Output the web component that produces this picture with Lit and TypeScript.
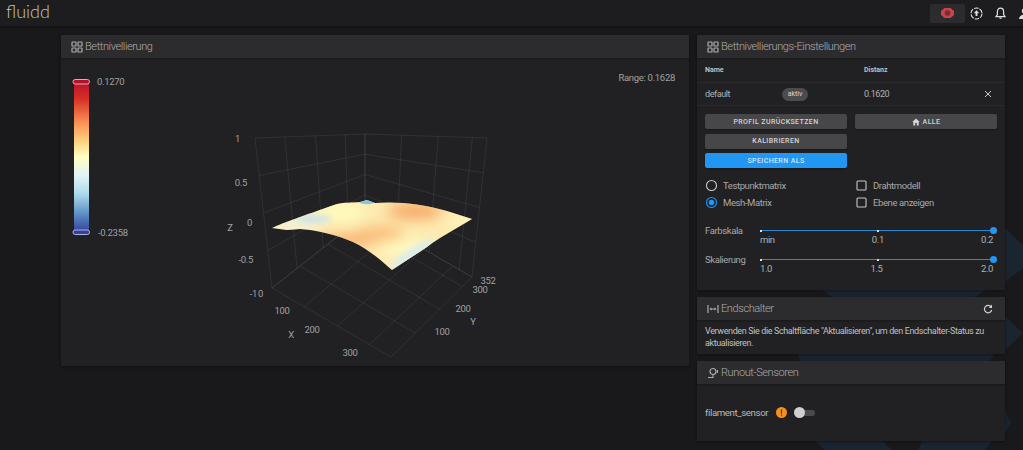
import { LitElement, css, html, svg } from "lit";
import { customElement } from "lit/decorators.js";

type Pt = [number, number];

// chart corners, page coordinates
const LEFT_WALL: Pt[] = [[255, 138], [365, 134], [365, 215], [272, 288]];
const RIGHT_WALL: Pt[] = [[365, 134], [487, 138], [472, 277], [365, 215]];
const FLOOR: Pt[] = [[272, 288], [365, 215], [472, 277], [391, 357]];

const lerp = (a: Pt, b: Pt, t: number): Pt => [a[0] + (b[0] - a[0]) * t, a[1] + (b[1] - a[1]) * t];

function quadLines(q: Pt[], uStops: number[], vStops: number[]) {
  const lines: [Pt, Pt][] = [];
  for (const u of uStops) lines.push([lerp(q[0], q[1], u), lerp(q[3], q[2], u)]);
  for (const v of vStops) lines.push([lerp(q[0], q[3], v), lerp(q[1], q[2], v)]);
  return lines;
}

const GRID_ICON = svg`<svg class="icon" viewBox="0 0 12 12"><g fill="none" stroke="currentColor" stroke-width="1.2"><rect x="1" y="1" width="4" height="4" rx=".6"/><rect x="7" y="1" width="4" height="4" rx=".6"/><rect x="1" y="7" width="4" height="4" rx=".6"/><rect x="7" y="7" width="4" height="4" rx=".6"/></g></svg>`;

@customElement("mesh-chart")
export class MeshChart extends LitElement {
  static override styles = css`
    :host {
      display: block;
      height: 308px;
    }
    svg {
      display: block;
      width: 628px;
      height: 308px;
    }
    text {
      font-family: Roboto, sans-serif;
      font-size: 9.5px;
      letter-spacing: -0.3px;
      fill: #a0a0a2;
    }
  `;

  private grid() {
    const zs = [0, 0.25, 0.5, 0.75, 1];
    const lines = [
      ...quadLines(LEFT_WALL, [0, 0.27, 0.55, 0.82, 1], zs),
      ...quadLines(RIGHT_WALL, [0, 0.3, 0.6, 0.88, 1], zs),
      ...quadLines(FLOOR, [0, 0.3, 0.6, 0.88, 1], [0, 0.27, 0.55, 0.82, 1]),
    ];
    return lines.map(
      ([a, b]) => svg`<line x1=${a[0]} y1=${a[1]} x2=${b[0]} y2=${b[1]} stroke="#fff" stroke-opacity=".07" stroke-width="1"/>`
    );
  }

  override render() {
    const surface =
      "M272 228 C285 222 300 217 337 204 C345 202 352 203 360 202 L367 200 L375 203 C395 201 425 204 447 211 L472 219 L450 232 C440 238 432 243 427 247 L392 270 C385 264 370 250 353 242 C335 234 315 230 300 229 L287 230 Z";
    return html`<svg viewBox="61 58 628 308">
      <defs>
        <linearGradient id="scale" x1="0" y1="0" x2="0" y2="1">
          <stop offset="0" stop-color="#b5102c"/>
          <stop offset=".12" stop-color="#d73027"/>
          <stop offset=".27" stop-color="#f98e52"/>
          <stop offset=".38" stop-color="#fdc777"/>
          <stop offset=".5" stop-color="#ffffbf"/>
          <stop offset=".63" stop-color="#e0f3f8"/>
          <stop offset=".75" stop-color="#abd9e9"/>
          <stop offset=".88" stop-color="#5d8fc4"/>
          <stop offset="1" stop-color="#33409a"/>
        </linearGradient>
        <clipPath id="mesh"><path d=${surface}/></clipPath>
        <filter id="soft" x="-50%" y="-50%" width="200%" height="200%"><feGaussianBlur stdDeviation="7"/></filter>
        <filter id="softer" x="-50%" y="-50%" width="200%" height="200%"><feGaussianBlur stdDeviation="3"/></filter>
      </defs>

      ${this.grid()}

      <g clip-path="url(#mesh)">
        <rect x="260" y="190" width="225" height="90" fill="#fdeab0"/>
        <g filter="url(#soft)">
          <ellipse cx="415" cy="211" rx="28" ry="8" fill="#f6a663"/>
          <ellipse cx="350" cy="240" rx="32" ry="5" fill="#f59e58"/>
          <ellipse cx="380" cy="234" rx="24" ry="8" fill="#fbbd7c"/>
          <ellipse cx="340" cy="212" rx="26" ry="8" fill="#ffffbf"/>
          <ellipse cx="405" cy="248" rx="26" ry="7" fill="#ffffc4"/>
          <ellipse cx="462" cy="222" rx="14" ry="5" fill="#fffac0"/>
          <ellipse cx="293" cy="224" rx="26" ry="5" fill="#ebf5ee"/>
        </g>
        <g filter="url(#softer)">
          <ellipse cx="314" cy="219" rx="18" ry="3.5" fill="#c5e1f0"/>
          <ellipse cx="412" cy="254" rx="26" ry="5" transform="rotate(-33 412 254)" fill="#d8edf0"/>
        </g>
        <ellipse cx="367" cy="201.5" rx="8" ry="2.8" fill="#7cc0e8" opacity=".9"/>
      </g>

      <rect x="74" y="81" width="15" height="151" fill="url(#scale)"/>
      <rect x="73" y="79.500" width="16.500" height="4.500" rx="2.200" fill="#b5102c" stroke="#e9a9b8"/>
      <rect x="73" y="230" width="16.500" height="4.500" rx="2.200" fill="#33409a" stroke="#aeb2e6"/>
      <text x="97" y="85">0.1270</text>
      <text x="98" y="236">-0.2358</text>
      <text x="675" y="81" text-anchor="end">Range: 0.1628</text>

      <text x="240" y="142" text-anchor="end">1</text>
      <text x="247" y="186" text-anchor="end">0.5</text>
      <text x="252" y="226" text-anchor="end">0</text>
      <text x="253" y="263" text-anchor="end">-0.5</text>
      <text x="257" y="297" text-anchor="end">-1</text>
      <text x="258" y="297">0</text>
      <text x="230" y="231" text-anchor="middle">Z</text>
      <text x="282" y="314" text-anchor="middle">100</text>
      <text x="312" y="333" text-anchor="middle">200</text>
      <text x="350" y="356" text-anchor="middle">300</text>
      <text x="291" y="338" text-anchor="middle">X</text>
      <text x="488" y="284" text-anchor="middle">352</text>
      <text x="480" y="293" text-anchor="middle">300</text>
      <text x="463" y="312" text-anchor="middle">200</text>
      <text x="442" y="335" text-anchor="middle">100</text>
      <text x="473" y="325" text-anchor="middle">Y</text>
    </svg>`;
  }
}

@customElement("app-root")
export class AppRoot extends LitElement {
  static override styles = css`
    :host {
      display: block;
      position: relative;
      width: 1023px;
      height: 450px;
      overflow: hidden;
      background: #19191b;
      font-family: Roboto, sans-serif;
      color: #d0d0d0;
    }
    .backdrop {
      position: absolute;
      inset: 0;
      width: 1023px;
      height: 450px;
    }
    .topbar {
      position: relative;
      height: 26px;
      display: flex;
      align-items: center;
      justify-content: space-between;
      background: #1d1d1f;
      box-shadow: 0 1px 3px rgba(0, 0, 0, 0.45);
    }
    .logo {
      margin: -4px 0 0 6px;
      font-family: Lato, sans-serif;
      font-size: 18px;
      font-weight: 300;
      color: #c4c4c4;
    }
    .actions {
      display: flex;
      align-items: center;
      margin-right: -8px;
      color: #e0e0e0;
    }
    .stop {
      width: 35px;
      height: 19px;
      margin-right: 5px;
      display: flex;
      align-items: center;
      justify-content: center;
      border-radius: 2px;
      background: #2c2c2f;
    }
    .stop svg {
      width: 13px;
      height: 10px;
    }
    .action {
      width: 13px;
      height: 13px;
      margin-right: 11px;
    }
    .action:last-child {
      margin-right: 0;
    }
    .layout {
      position: relative;
      display: grid;
      grid-template-columns: 628px 308px;
      gap: 8px;
      padding: 9px 18px 0 61px;
      align-items: start;
    }
    .side {
      display: flex;
      flex-direction: column;
      gap: 7px;
    }
    .card {
      background: #212123;
      box-shadow: 0 1px 3px rgba(0, 0, 0, 0.4);
    }
    .card-head {
      height: 23px;
      display: flex;
      align-items: center;
      gap: 2px;
      padding: 0 10px;
      background: #2c2c2f;
      color: #acacae;
      font-size: 11px;
      font-weight: 300;
      letter-spacing: -0.4px;
      box-shadow: 0 1px 2px rgba(0, 0, 0, 0.3);
    }
    .icon {
      width: 12px;
      height: 12px;
      flex: none;
    }
    .spacer {
      flex: 1;
    }
    .head-row,
    .profile {
      display: grid;
      grid-template-columns: 77px 82px 1fr auto;
      align-items: center;
      padding: 0 13px 0 8px;
      border-bottom: 1px solid #2a2a2c;
    }
    .head-row {
      height: 24px;
      font-size: 7px;
      font-weight: 700;
      color: #c0c0c0;
    }
    .profile {
      height: 22px;
      font-size: 9px;
      letter-spacing: -0.4px;
      color: #b0b0b0;
    }
    .chip {
      width: 26px;
      height: 13px;
      display: flex;
      align-items: center;
      justify-content: center;
      border-radius: 7px;
      background: #4c4c4f;
      font-size: 7px;
      letter-spacing: 0;
      color: #d8d8d8;
    }
    .close {
      width: 8px;
      height: 8px;
      color: #ccc;
    }
    .buttons {
      display: grid;
      grid-template-columns: 1fr 1fr;
      column-gap: 8px;
      row-gap: 4.5px;
      padding: 8px 8px 0;
    }
    button {
      height: 15px;
      padding: 0;
      display: flex;
      align-items: center;
      justify-content: center;
      gap: 3px;
      border: none;
      border-radius: 2px;
      background: #47474a;
      color: #d4d4d4;
      font-family: Roboto, sans-serif;
      font-size: 7px;
      font-weight: 500;
      letter-spacing: 0.4px;
      box-shadow: 0 1px 2px rgba(0, 0, 0, 0.3);
    }
    button.primary {
      grid-column: 1;
      background: #2196f3;
      color: #cfe8fb;
    }
    button svg {
      width: 8px;
      height: 8px;
    }
    .options {
      display: grid;
      grid-template-columns: 150px 1fr;
      grid-auto-rows: 17px;
      padding: 9px 8px 0;
      font-size: 9.5px;
      letter-spacing: -0.4px;
      color: #a8a8a8;
    }
    .option {
      display: flex;
      align-items: center;
      gap: 5px;
    }
    .option svg {
      width: 13px;
      height: 13px;
      flex: none;
    }
    .sliders {
      display: flex;
      flex-direction: column;
      gap: 9px;
      padding: 14px 12px 16px 8px;
    }
    .slider {
      display: grid;
      grid-template-columns: 55px 1fr;
      font-size: 9.5px;
      letter-spacing: -0.4px;
      color: #a8a8a8;
      line-height: 11px;
    }
    .track {
      position: relative;
      height: 1px;
      margin-top: 5px;
      background: #2a87d0;
    }
    .tick {
      position: absolute;
      top: -0.5px;
      width: 2px;
      height: 2px;
      background: #ddd;
    }
    .thumb {
      position: absolute;
      right: -3.5px;
      top: -3px;
      width: 7px;
      height: 7px;
      border-radius: 50%;
      background: #2196f3;
    }
    .marks {
      display: flex;
      justify-content: space-between;
      margin-top: 4px;
      font-size: 9.5px;
      line-height: 10px;
      color: #b0b0b0;
    }
    .note {
      padding: 5px 8px 5px;
      font-size: 9px;
      letter-spacing: -0.38px;
      line-height: 12px;
      color: #c0c0c0;
    }
    .sensor {
      height: 57px;
      display: flex;
      align-items: center;
      padding: 0 8px;
      font-size: 9.7px;
      letter-spacing: -0.4px;
      color: #b8b8b8;
    }
    .warn {
      width: 11px;
      height: 11px;
      margin: 0 8px 0 8px;
    }
    .switch {
      position: relative;
      width: 20px;
      height: 6px;
      border-radius: 3px;
      background: #4a4a4c;
    }
    .switch::after {
      content: "";
      position: absolute;
      left: -1px;
      top: -2.5px;
      width: 11px;
      height: 11px;
      border-radius: 50%;
      background: #cfcfcf;
    }
  `;

  private slider(label: string, marks: string[]) {
    return html`<div class="slider">
      <span>${label}</span>
      <div>
        <div class="track">
          <span class="tick" style="left:0"></span>
          <span class="tick" style="left:50%"></span>
          <span class="thumb"></span>
        </div>
        <div class="marks">${marks.map((m) => html`<span>${m}</span>`)}</div>
      </div>
    </div>`;
  }

  private radio(label: string, on: boolean) {
    const color = on ? "#2196f3" : "#c8c8c8";
    return html`<label class="option">
      <svg viewBox="0 0 13 13">
        <circle cx="6.5" cy="6.5" r="5" fill="none" stroke=${color} stroke-width="1.1"/>
        ${on ? svg`<circle cx="6.5" cy="6.5" r="2.8" fill=${color}/>` : ""}
      </svg>${label}
    </label>`;
  }

  private check(label: string) {
    return html`<label class="option">
      <svg viewBox="0 0 13 13"><rect x="2" y="2" width="9" height="9" rx="1" fill="none" stroke="#c8c8c8" stroke-width="1.1"/></svg>${label}
    </label>`;
  }

  override render() {
    return html`
      <svg class="backdrop" viewBox="0 0 1023 450">
        <g fill="#1b2530">
          <polygon points="1005,228 1023,245 1023,268 1005,282"/>
          <polygon points="1005,316 1023,333 1005,350"/>
          <polygon points="1005,410 1011,423 1005,433"/>
          <polygon points="822,290 985,290 975,297 832,297"/>
          <polygon points="798,353 995,353 990,361 800,361"/>
          <polygon points="815,441 882,441 892,450 825,450"/>
          <polygon points="922,441 992,441 985,450 918,450"/>
        </g>
      </svg>

      <header class="topbar">
        <span class="logo">fluidd</span>
        <div class="actions">
          <span class="stop">
            <svg viewBox="0 0 13 10">
              <path fill="#c8434c" d="M3.5 0h6L13 3v4l-3.5 3h-6L0 7V3z"/>
              <circle cx="6.5" cy="5" r="2.8" fill="#7a2a31"/>
            </svg>
          </span>
          <svg class="action" viewBox="0 0 13 13">
            <circle cx="6.5" cy="6.5" r="5.5" fill="none" stroke="currentColor" stroke-width="1.1" stroke-dasharray="4.5 1.2"/>
            <path fill="currentColor" d="M6.5 3.2 9.2 6.2H7.4V9H5.6V6.2H3.8z"/>
          </svg>
          <svg class="action" viewBox="0 0 13 13">
            <path fill="none" stroke="currentColor" stroke-width="1.2" d="M6.5 1.2C4.2 1.2 3.4 3 3.4 4.8V7.6L2 9.6H11L9.6 7.6V4.8C9.6 3 8.8 1.2 6.5 1.2Z"/>
            <path fill="currentColor" d="M5.2 10.6h2.6A1.3 1.3 0 0 1 5.2 10.6Z"/>
          </svg>
          <svg class="action" viewBox="0 0 13 13">
            <circle cx="6.5" cy="4" r="2.7" fill="currentColor"/>
            <path fill="currentColor" d="M1 12c0-2.7 2.8-4.3 5.5-4.3S12 9.3 12 12z"/>
          </svg>
        </div>
      </header>

      <main class="layout">
        <section class="card">
          <div class="card-head">${GRID_ICON}Bettnivellierung</div>
          <mesh-chart></mesh-chart>
        </section>

        <div class="side">
          <section class="card">
            <div class="card-head">${GRID_ICON}Bettnivellierungs-Einstellungen</div>
            <div class="head-row"><span>Name</span><span></span><span>Distanz</span><span></span></div>
            <div class="profile">
              <span>default</span>
              <span class="chip">aktiv</span>
              <span>0.1620</span>
              <svg class="close" viewBox="0 0 8 8"><path stroke="currentColor" stroke-width="1" d="M1 1l6 6M7 1 1 7"/></svg>
            </div>
            <div class="buttons">
              <button>PROFIL ZURÜCKSETZEN</button>
              <button>
                <svg viewBox="0 0 8 8"><path fill="currentColor" d="M3.2 7.4V5h1.6v2.4h1.9V4h1.1L4 .6 .2 4h1.1v3.4z"/></svg>ALLE
              </button>
              <button>KALIBRIEREN</button>
              <span></span>
              <button class="primary">SPEICHERN ALS</button>
            </div>
            <div class="options">
              ${this.radio("Testpunktmatrix", false)} ${this.check("Drahtmodell")}
              ${this.radio("Mesh-Matrix", true)} ${this.check("Ebene anzeigen")}
            </div>
            <div class="sliders">
              ${this.slider("Farbskala", ["min", "0.1", "0.2"])}
              ${this.slider("Skalierung", ["1.0", "1.5", "2.0"])}
            </div>
          </section>

          <section class="card">
            <div class="card-head">
              <svg class="icon" viewBox="0 0 12 12">
                <path fill="none" stroke="currentColor" stroke-width="1.2" d="M1 2v8M11 2v8M3 6h6"/>
                <path fill="currentColor" d="M2.6 6 4.6 4.4v3.2zM9.4 6 7.4 4.4v3.2z"/>
              </svg>
              Endschalter
              <span class="spacer"></span>
              <svg class="icon" viewBox="0 0 12 12" style="margin-right:1px">
                <path fill="none" stroke="#d0d0d0" stroke-width="1.2" d="M9.2 4A3.7 3.7 0 1 0 9.7 7"/>
                <path fill="#d0d0d0" d="M10 1.6v3.3H6.8z"/>
              </svg>
            </div>
            <div class="note">
              Verwenden Sie die Schaltfläche "Aktualisieren", um den Endschalter-Status zu aktualisieren.
            </div>
          </section>

          <section class="card">
            <div class="card-head">
              <svg class="icon" viewBox="0 0 12 12">
                <circle cx="6" cy="4.5" r="3" fill="none" stroke="currentColor" stroke-width="1.2"/>
                <path fill="none" stroke="currentColor" stroke-width="1.1" d="M6 7.5V10.5H1M10.5 3v3"/>
              </svg>
              Runout-Sensoren
            </div>
            <div class="sensor">
              filament_sensor
              <svg class="warn" viewBox="0 0 11 11">
                <circle cx="5.5" cy="5.5" r="5.5" fill="#f68f1e"/>
                <path stroke="#5a3408" stroke-width="1.2" d="M5.5 2.5v4M5.5 7.5v1.2"/>
              </svg>
              <span class="switch"></span>
            </div>
          </section>
        </div>
      </main>
    `;
  }
}
